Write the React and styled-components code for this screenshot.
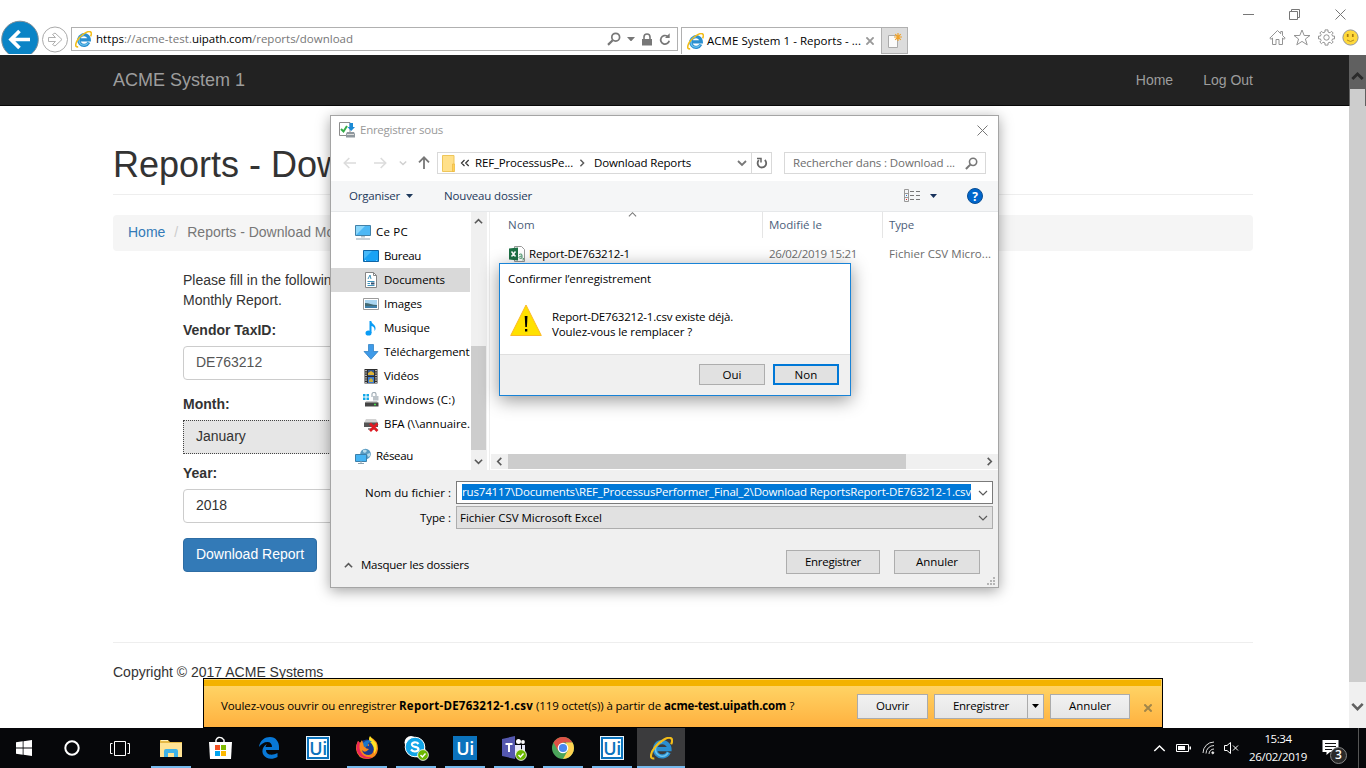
import React, { useLayoutEffect, useRef, useState } from "react";
import styled, { createGlobalStyle, css } from "styled-components";

const ui = `"Open Sans", "Noto Sans", sans-serif`;
const web = `"Liberation Sans", Arial, sans-serif`;

const GlobalStyle = createGlobalStyle`
  *, *::before, *::after { box-sizing: border-box; }
  body { margin: 0; background: #fff; overflow: hidden; }
  svg { display: block; flex: none; }
`;

/* ---------- text that keeps a fixed advance width ---------- */

const FitSpan = styled.span`
  display: inline-block;
  flex: none;
  width: max-content;
  white-space: pre;
  color: ${(p) => p.$color || "inherit"};
  font-weight: ${(p) => (p.$bold ? 700 : "inherit")};
`;

function Fit({ w, color, bold, children }) {
  const ref = useRef(null);
  const [spacing, setSpacing] = useState(0);
  useLayoutEffect(() => {
    const natural = ref.current.getBoundingClientRect().width;
    setSpacing((w - natural) / ref.current.textContent.length);
  }, [w]);
  return (
    <FitSpan ref={ref} $color={color} $bold={bold} style={{ letterSpacing: spacing }}>
      {children}
    </FitSpan>
  );
}

/* ---------- shared icons ---------- */

const IeLogo = ({ size = 16 }) => (
  <svg width={size} height={size} viewBox="0 0 16 16" fill="none">
    <path d="M13 10.7A5 5 0 1 1 13.5 8.4H4.5" stroke="#2a8fd0" strokeWidth="3" />
    <path d="M12.6 10.9A4.7 4.7 0 0 1 3.8 8.6A4.9 4.9 0 0 1 8.4 3.7" stroke="#6cc4ee" strokeWidth="1.1" />
    <path d="M3 14.9C-.5 15.6.2 11 3.6 6.9C7.4 2.300 13.300-.9 15 1.200C15.700 2.100 15.400 3.500 14.700 5" stroke="#f3bd19" strokeWidth="1.5" />
  </svg>
);

const Chevron = ({ dir = "down", w = 9, color = "#5a5a5a", sw = 1.8 }) => {
  const turn = { down: 0, left: 90, up: 180, right: 270 }[dir];
  return (
    <svg width={w} height={w} viewBox="0 0 10 10" fill="none">
      <path d="M1 3L5 7L9 3" stroke={color} strokeWidth={sw} transform={`rotate(${turn} 5 5)`} />
    </svg>
  );
};

const Caret = ({ w = 8, color = "#1e395b" }) => (
  <svg width={w} height={w / 2 + 0.5} viewBox="0 0 8 4.500">
    <path d="M0 0H8L4 4.500Z" fill={color} />
  </svg>
);

const Magnifier = ({ size = 14, color = "#777" }) => (
  <svg width={size} height={size} viewBox="0 0 14 14" fill="none" stroke={color}>
    <circle cx="8.700" cy="5.200" r="3.900" strokeWidth="1.700" />
    <path d="M5.700 8.200L1 12.900" strokeWidth="2.200" />
  </svg>
);

const Cross = ({ size = 11, color = "#777", sw = 1 }) => (
  <svg width={size} height={size} viewBox="0 0 11 11">
    <path d="M.5.5L10.500 10.500M10.500.5L.5 10.500" stroke={color} strokeWidth={sw} />
  </svg>
);

const ArrowIcon = ({ turn = 0, size = 14, color, sw = 1.6 }) => (
  <svg width={size} height={size} viewBox="0 0 14 14" fill="none" stroke={color} strokeWidth={sw}>
    <path d="M1.500 7H13M6.300 2L1.300 7L6.300 12" transform={`rotate(${turn} 7 7)`} />
  </svg>
);

/* ---------- browser frame ---------- */

const Screen = styled.div`
  position: relative;
  display: flex;
  flex-direction: column;
  width: 1366px;
  height: 768px;
  overflow: hidden;
  font-family: ${ui};
  font-size: 11.5px;
  line-height: 16px;
  color: #000;
  background: #fff;
`;

const Chrome = styled.header`
  flex: none;
  height: 54px;
  margin-bottom: 1px;
  overflow: hidden;
  display: grid;
  grid-template-rows: 27px 27px;
`;

const WindowControls = styled.div`
  display: flex;
  justify-content: flex-end;
  gap: 35px;
  padding: 9px 20px 0 0;
`;

const NavRow = styled.div`
  display: flex;
  align-items: flex-start;
`;

const RoundButtons = styled.div`
  width: 71px;
  height: 27px;
  display: flex;
  align-items: center;
  margin-top: -1px;
`;

const AddressBar = styled.div`
  width: 607px;
  height: 24px;
  display: flex;
  align-items: center;
  border: 1px solid #b0b0b0;
  padding: 0 6px 0 3px;
  gap: 4px;
`;

const AddressTools = styled.div`
  margin-left: auto;
  display: flex;
  align-items: center;
  gap: 6px;
`;

const Tab = styled.div`
  width: 200px;
  height: 27px;
  margin-left: 3px;
  display: flex;
  align-items: center;
  gap: 3px;
  border: 1px solid #b0b0b0;
  border-width: 1px 0 0 1px;
  padding: 0 7px 0 5px;
  & > svg:last-child { margin-left: auto; }
`;

const NewTab = styled.div`
  width: 27px;
  height: 27px;
  display: grid;
  place-items: center;
  border: 1px solid #b0b0b0;
  background: #dcdcdc;
`;

const ChromeTools = styled.div`
  margin: 2px 7px 0 auto;
  display: flex;
  gap: 7px;
`;

function BrowserChrome() {
  return (
    <Chrome>
      <WindowControls>
        <svg width="11" height="11"><path d="M0 5.500H11" stroke="#777" /></svg>
        <svg width="11" height="11" fill="none" stroke="#777"><path d="M.5 2.500H8.500V10.500H.5ZM2.500 2.500V.5H10.500V8.500H8.500" /></svg>
        <Cross />
      </WindowControls>
      <NavRow>
        <RoundButtons>
          <svg width="71" height="40" viewBox="0 0 71 40">
            <circle cx="20" cy="19.500" r="18.300" fill="#0a84c6" stroke="#7b8d98" />
            <path d="M30 19.500H12M19.500 11L11 19.500L19.500 28" fill="none" stroke="#fff" strokeWidth="3.700" />
            <circle cx="55" cy="19.500" r="12.500" fill="#fff" stroke="#aaa" />
            <path d="M48.500 17.500H55.500L52.500 14.500L55 13L62 19.500L55 26L52.500 24.500L55.500 21.500H48.500Z" fill="#fff" stroke="#b0b0b0" />
          </svg>
        </RoundButtons>
        <AddressBar>
          <IeLogo size={17} />
          <div>
            <Fit w={28}>https</Fit><Fit w={68} color="#777">://acme-test.</Fit>
            <Fit w={60}>uipath.com</Fit><Fit w={101} color="#777">/reports/download</Fit>
          </div>
          <AddressTools>
            <Magnifier />
            <Caret w={8} color="#777" />
            <svg width="12" height="13" viewBox="0 0 12 13"><path d="M1 6H11V12.500H1Z" fill="#777" /><path d="M3 6V4A3 3 0 0 1 9 4V6" fill="none" stroke="#777" strokeWidth="1.600" /></svg>
            <svg width="12" height="13" viewBox="0 0 12 13"><path d="M8.500 3.300A4.300 4.300 0 1 0 10.200 7.700" fill="none" stroke="#777" strokeWidth="1.700" /><path d="M6 4.900H10.700V.3Z" fill="#777" /></svg>
          </AddressTools>
        </AddressBar>
        <Tab>
          <IeLogo size={17} />
          <Fit w={154}>ACME System 1 - Reports - ...</Fit>
          <Cross size={8} color="#999" sw={2.6} />
        </Tab>
        <NewTab>
          <svg width="16" height="16" viewBox="0 0 16 16"><path d="M1.500 2.500H10.500V14.500H1.500Z" fill="#fbfbfb" stroke="#aaa" /><path d="M11 0V8M7 4H15M8.200 1.200L13.800 6.800M13.800 1.200L8.200 6.800" stroke="#efa22a" strokeWidth="1.200" /></svg>
        </NewTab>
        <ChromeTools>
          <svg width="17" height="17" viewBox="0 0 17 17" fill="none" stroke="#949494"><path d="M8.500 1.500L.8 9.200L2 10.300L3.500 9V15.500H7V10.500H10V15.500H13.500V9L15 10.300L16.200 9.200L13.500 6.500V2.500H11.700V4.700Z" /></svg>
          <svg width="18" height="17" viewBox="0 0 18 17" fill="none" stroke="#949494"><path d="M9 1L11.200 6.500H17L12.400 10L14.200 15.800L9 12.400L3.800 15.800L5.600 10L1 6.500H6.800Z" /></svg>
          <svg width="17" height="17" viewBox="0 0 17 17" fill="none" stroke="#949494">
            <circle cx="8.500" cy="8.500" r="2.700" />
            <path d="M7 .9H10V3L12 3.800L13.500 2.300L15.200 4L13.900 5.500L14.600 7.100H16.500V9.900H14.600L13.900 11.500L15.200 13L13.500 14.700L12 13.200L10 14V16.100H7V14L5 13.200L3.500 14.700L1.800 13L3.100 11.500L2.400 9.900H.5V7.100H2.400L3.100 5.500L1.800 4L3.500 2.300L5 3.800L7 3Z" />
          </svg>
          <svg width="17" height="17" viewBox="0 0 17 17"><circle cx="8.500" cy="8.500" r="7.600" fill="#ffd93b" stroke="#949494" /><path d="M5.700 5V8M10.800 5V8" stroke="#a67a13" strokeWidth="1.700" /><path d="M5 11Q8.500 14 12 11" fill="none" stroke="#b28a22" /></svg>
        </ChromeTools>
      </NavRow>
    </Chrome>
  );
}

/* ---------- web page ---------- */

const Viewport = styled.main`
  flex: none;
  height: 673px;
  display: grid;
  grid-template-columns: 1349px 17px;
  font-family: ${web};
`;

const Page = styled.div`
  font-size: 14px;
  line-height: 20px;
  color: #333;
  overflow: hidden;
`;

const NavBar = styled.nav`
  height: 51px;
  display: flex;
  align-items: center;
  gap: 30px;
  padding: 0 96px 1px 113px;
  color: #9d9d9d;
  background: #222;
  border-bottom: 1px solid #080808;
`;

const Brand = styled.span`
  font-size: 18px;
  margin-right: auto;
`;

const Content = styled.div`
  width: 1140px;
  margin-left: 113px;
`;

const Title = styled.h1`
  margin: 0 0 20px;
  padding: 39px 0 9px;
  font-size: 36px;
  line-height: 40px;
  font-weight: 400;
  border-bottom: 1px solid #eee;
`;

const Breadcrumb = styled.div`
  height: 36px;
  display: flex;
  align-items: center;
  padding: 0 15px 2px;
  background: #f5f5f5;
  color: #777;
  border-radius: 4px;
`;

const Crumb = styled.a`
  color: #337ab7;
`;

const Slash = styled.span`
  color: #ccc;
  padding: 0 9px 0 9px;
`;

const Form = styled.form`
  width: 262px;
  margin-left: 70px;
  padding-top: 19px;
`;

const Intro = styled.p`
  margin: 0 0 10px;
`;

const FieldLabel = styled.label`
  display: block;
  font-weight: 700;
  margin-bottom: 6px;
`;

const Field = styled.div`
  height: 34px;
  padding: 5px 12px;
  margin-bottom: ${(p) => p.$gap}px;
  border: 1px solid #ccc;
  border-radius: 4px;
  color: ${(p) => p.$color || "#333"};
  ${(p) => p.$focused && css`
    background: #e6e6e6;
    border: 1px dotted #444;
    border-radius: 0;
  `}
`;

const PrimaryButton = styled.button`
  width: 134px;
  height: 34px;
  padding: 0 0 2px;
  border: 1px solid #2e6da4;
  border-radius: 4px;
  background: #337ab7;
  color: #fff;
  font: 14px ${web};
`;

const Footer = styled.footer`
  margin-top: 70px;
  padding-top: 19px;
  border-top: 1px solid #eee;
`;

const PageScroll = styled.div`
  display: flex;
  flex-direction: column;
  background: #f0f0f0;
`;

const ScrollUp = styled.div`
  height: 34px;
  display: grid;
  place-items: center;
  padding-top: 9px;
  background: #606060;
`;

const PageThumb = styled.div`
  height: 593px;
  background: linear-gradient(#606060, #606060) left top / 1px 17px no-repeat,
    linear-gradient(#606060, #606060) right top / 1px 17px no-repeat, #cdcdcd;
`;

const ScrollDown = styled.div`
  height: 46px;
  display: grid;
  place-items: center;
  padding-top: 3px;
`;

function WebPage() {
  return (
    <Viewport>
      <Page>
        <NavBar>
          <Brand>ACME System 1</Brand>
          <span>Home</span>
          <span>Log Out</span>
        </NavBar>
        <Content>
          <Title>Reports - Download Monthly Report</Title>
          <Breadcrumb>
            <Crumb>Home</Crumb>
            <Slash>/</Slash>
            <span>Reports - Download Monthly Report</span>
          </Breadcrumb>
          <Form>
            <Intro>Please fill in the following to download<br />Monthly Report.</Intro>
            <FieldLabel>Vendor TaxID:</FieldLabel>
            <Field $gap={14} $color="#555">DE763212</Field>
            <FieldLabel>Month:</FieldLabel>
            <Field $gap={9} $focused>January</Field>
            <FieldLabel>Year:</FieldLabel>
            <Field $gap={15}>2018</Field>
            <PrimaryButton type="button">Download Report</PrimaryButton>
          </Form>
          <Footer>Copyright © 2017 ACME Systems</Footer>
        </Content>
      </Page>
      <PageScroll>
        <ScrollUp><Chevron dir="up" w={13} color="#2b2b2b" sw={2.2} /></ScrollUp>
        <PageThumb />
        <ScrollDown><Chevron w={13} color="#606060" sw={2} /></ScrollDown>
      </PageScroll>
    </Viewport>
  );
}

/* ---------- download bar ---------- */

const DownloadBar = styled.div`
  position: absolute;
  left: 203px;
  top: 678px;
  width: 960px;
  height: 50px;
  display: flex;
  align-items: center;
  padding: 6px 10px 0 17px;
  border: 1px solid #000;
  background: linear-gradient(#f3b200, #f3b200) 0 1px / 957px 6px no-repeat,
    linear-gradient(#ffd364, #ffd364 7px, #ffb13f);
`;

const BarButton = styled.button`
  width: ${(p) => p.$w}px;
  height: 25px;
  margin-left: ${(p) => p.$ml}px;
  padding: 0;
  display: grid;
  place-items: center;
  border: 1px solid #ababab;
  background: linear-gradient(#f1f1f1, #e6e6e6);
  font: inherit;
`;

const BarClose = styled.div`
  margin: 3px 0 0 auto;
`;

function DownloadPrompt() {
  return (
    <DownloadBar>
      <Fit w={178}>Voulez-vous ouvrir ou enregistrer </Fit>
      <Fit w={134} bold>Report-DE763212-1.csv</Fit>
      <Fit w={131}> (119 octet(s)) à partir de </Fit>
      <Fit w={122} bold>acme-test.uipath.com</Fit>
      <Fit w={9}> ?</Fit>
      <BarButton $w={71} $ml={62}><Fit w={33}>Ouvrir</Fit></BarButton>
      <BarButton $w={94} $ml={6}><Fit w={56}>Enregistrer</Fit></BarButton>
      <BarButton $w={17} $ml={-1}><Caret w={7} color="#000" /></BarButton>
      <BarButton $w={80} $ml={6}><Fit w={42}>Annuler</Fit></BarButton>
      <BarClose><Cross size={8} color="#a1864a" sw={2.7} /></BarClose>
    </DownloadBar>
  );
}

/* ---------- save dialog ---------- */

const Dialog = styled.section`
  position: absolute;
  left: 330px;
  top: 115px;
  width: 669px;
  height: 473px;
  display: flex;
  flex-direction: column;
  border: 1px solid #a5a5a5;
  background: #fff;
  box-shadow: 0 3px 13px rgba(0, 0, 0, 0.36);
`;

const DialogTitle = styled.div`
  height: 30px;
  display: flex;
  align-items: center;
  gap: 5px;
  padding: 0 10px 2px 8px;
  color: #999;
  & > svg:last-child { margin-left: auto; }
`;

const PathRow = styled.div`
  height: 35px;
  display: flex;
  align-items: center;
  padding: 0 12px 1px;
`;

const HistoryArrows = styled.div`
  width: 94px;
  display: grid;
  grid-template-columns: 30px 26px 18px 14px;
  align-items: center;
`;

const Box = styled.div`
  width: ${(p) => p.$w}px;
  height: 22px;
  margin-left: ${(p) => p.$ml || 0}px;
  display: flex;
  align-items: center;
  justify-content: ${(p) => p.$justify || "flex-start"};
  gap: ${(p) => p.$gap || 0}px;
  padding: 0 ${(p) => p.$pr || 0}px 0 ${(p) => p.$pl || 0}px;
  border: 1px solid #d9d9d9;
`;

const PathSeparator = styled.div`
  width: 11px;
`;

const PathEnd = styled.div`
  margin-left: auto;
`;

const Toolbar = styled.div`
  height: 31px;
  display: flex;
  align-items: center;
  padding: 0 15px 1px 18px;
  color: #1e395b;
  background: #f5f6f7;
  border-bottom: 1px solid #e6e8ea;
`;

const ToolItem = styled.div`
  display: flex;
  align-items: center;
  gap: 6px;
  margin-right: 31px;
`;

const ToolIcons = styled.div`
  margin-left: auto;
  display: flex;
  align-items: center;
`;

const CaretSlot = styled.div`
  margin-left: 9px;
`;

const Help = styled.div`
  width: 16px;
  height: 16px;
  margin-left: 30px;
  display: grid;
  place-items: center;
  border: 1px solid #094e94;
  border-radius: 50%;
  background: #0066cc;
  color: #fff;
  font-weight: 700;
  font-size: 12px;
`;

const Browser = styled.div`
  height: 258px;
  display: grid;
  grid-template-columns: 140px 16px 1fr;
`;

const Tree = styled.div`
  overflow: hidden;
  padding-top: 8px;
`;

const TreeRow = styled.div`
  width: 139px;
  height: 24px;
  display: flex;
  align-items: center;
  gap: 5px;
  overflow: hidden;
  margin-top: ${(p) => p.$mt || 0}px;
  padding-left: ${(p) => (p.$root ? 24 : 32)}px;
  background: ${(p) => (p.$selected ? "#d9d9d9" : "transparent")};
`;

const VScroll = styled.div`
  display: flex;
  flex-direction: column;
  align-items: center;
  justify-content: space-between;
  padding: 5px 1px 4px 0;
  background: #f0f0f0;
`;

const VThumb = styled.div`
  width: 15px;
  height: 104px;
  margin: 113px 0 0;
  background: #cdcdcd;
`;

const FileList = styled.div`
  display: flex;
  flex-direction: column;
  margin-left: 2px;
  border-left: 1px solid #eee;
`;

const Columns = styled.div`
  position: relative;
  display: grid;
  grid-template-columns: 273px 120px 1fr;
  height: 26px;
  color: #4c607a;
`;

const ColumnHead = styled.div`
  padding: 5px 0 0 ${(p) => p.$pl}px;
  border-right: ${(p) => (p.$last ? 0 : 1)}px solid #e5e5e5;
`;

const SortMark = styled.div`
  position: absolute;
  left: 138px;
  top: -2px;
`;

const FileRow = styled.div`
  display: grid;
  grid-template-columns: 279px 120px 1fr;
  padding-top: 8px;
  color: #6d6d6d;
`;

const FileName = styled.div`
  display: flex;
  gap: 4px;
  padding-left: 19px;
  color: #000;
`;

const HScroll = styled.div`
  height: 15px;
  margin: auto 0 1px 1px;
  display: grid;
  grid-template-columns: 17px 398px 1fr;
  align-items: center;
  justify-items: center;
  background: #f0f0f0;
  & > svg:last-child { justify-self: end; margin-right: 4px; }
`;

const HThumb = styled.div`
  width: 100%;
  height: 15px;
  background: #cdcdcd;
`;

const SavePanel = styled.div`
  flex: 1;
  display: flex;
  flex-direction: column;
  padding: 11px 5px 0 0;
  background: #f0f0f0;
`;

const SaveRow = styled.div`
  display: flex;
  justify-content: flex-end;
  align-items: center;
  gap: 5px;
  height: 23px;
  margin-bottom: 2px;
`;

const Combo = styled.div`
  width: 537px;
  height: 23px;
  display: flex;
  align-items: center;
  padding: 0 4px 0 ${(p) => (p.$plain ? 3 : 5)}px;
  border: 1px solid ${(p) => (p.$plain ? "#adadad" : "#7a7a7a")};
  background: ${(p) => (p.$plain ? "#e1e1e1" : "#fff")};
  & > svg { margin-left: auto; }
`;

const Selection = styled.div`
  height: 16px;
  margin-bottom: 2px;
  line-height: 15px;
  color: #fff;
  background: #0078d7;
`;

const ActionRow = styled.div`
  display: flex;
  align-items: flex-start;
  padding: 19px 13px 0 13px;
`;

const HideFolders = styled.div`
  margin: 7px auto 0 0;
  display: flex;
  align-items: center;
  gap: 8px;
`;

const WinButton = styled.button`
  width: ${(p) => p.$w}px;
  height: ${(p) => p.$h}px;
  margin-left: ${(p) => p.$ml}px;
  padding: 0;
  display: grid;
  place-items: center;
  border: ${(p) => (p.$focus ? "2px solid #0078d7" : "1px solid #adadad")};
  background: #e1e1e1;
  font: inherit;
`;

const Grip = styled.svg`
  position: absolute;
  right: 2px;
  bottom: 1px;
`;

const treeIcons = {
  pc: <svg width="16" height="16" viewBox="0 0 16 16"><path d="M.5 1.500H15.500V11.500H.5Z" fill="#4db8f5" stroke="#4281a8" /><path d="M1 11L10 2H1Z" fill="#8bd7fb" /><path d="M6 12H10V13.500H6Z" fill="#b8c4cb" /><path d="M1 15H15" stroke="#8fa3b0" /></svg>,
  desk: <svg width="16" height="16" viewBox="0 0 16 16"><path d="M.5 2.500H15.500V13.500H.5Z" fill="#19a2f5" stroke="#0e64a5" /><path d="M1 11L9 3H1Z" fill="#46b9fa" /><path d="M2 12.500H13.500" stroke="#d8effc" strokeDasharray="1 10" /></svg>,
  doc: <svg width="16" height="16" viewBox="0 0 16 16"><path d="M2.500.5H10.500L13.500 3.500V15.500H2.500Z" fill="#fff" stroke="#858585" /><path d="M10.500.5V3.500H13.500" fill="none" stroke="#858585" /><path d="M5 7L7 3L8 7M4.500 9.500H11.500M4.500 11.500H7M4.500 13.500H11.500" fill="none" stroke="#3e92ba" /><path d="M8 11.500H11.500" stroke="#334f70" strokeWidth="2" /></svg>,
  img: <svg width="16" height="16" viewBox="0 0 16 16"><path d="M.5 2.500H15.500V13.500H.5Z" fill="#fff" stroke="#9b9b9b" /><path d="M2 4H14V12H2Z" fill="#a9d5f0" /><path d="M2 7C6 7 9 9 14 9V12H2Z" fill="#426a74" /><path d="M2 10H14V12H2Z" fill="#3f7fa8" /></svg>,
  music: <svg width="16" height="16" viewBox="0 0 16 16"><ellipse cx="5.500" cy="13" rx="3" ry="2.600" fill="#0a9cf5" /><path d="M6.500 13V1H8.300C8.500 4 13 4.500 12.500 9C12.400 9.800 12 10.500 11.500 11C12 8 10.500 6.600 8.500 6V13Z" fill="#0a9cf5" /></svg>,
  down: <svg width="16" height="16" viewBox="0 0 16 16"><path d="M5.500.5H10.500V7.500H15L8 15.300L1 7.500H5.500Z" fill="#3e9ae8" stroke="#2478bf" strokeWidth=".7" /></svg>,
  video: <svg width="16" height="16" viewBox="0 0 16 16"><path d="M1.500 1H14.500V15.500H1.500Z" fill="#2d2d2d" /><path d="M3 2V15M13 2V15" stroke="#eee" strokeWidth="1.300" strokeDasharray="1.200 1.200" /><path d="M5 2H11V8H5Z" fill="#35588e" /><path d="M5 9H11V15H5Z" fill="#3a7bd1" /><path d="M5 5L8 3L11 5V7H5Z" fill="#e0b436" /><path d="M6 12L8 10L10 12V14H6Z" fill="#c7ae42" /></svg>,
  disk: <svg width="16" height="16" viewBox="0 0 16 16"><path d="M0 2H2.500V4.500H0ZM3.500 2H6V4.500H3.500ZM0 5.500H2.500V8H0ZM3.500 5.500H6V8H3.500Z" fill="#12a8e8" /><path d="M3 9H14L15 11H2Z" fill="#c9c9c9" /><path d="M2 10.500H15.500V14.500H2Z" fill="#454545" /><path d="M11 12.500H13" stroke="#48e04c" strokeWidth="1.500" /><path d="M9 5V2.800A2 2 0 0 1 13 2V4" fill="none" stroke="#a5b0b8" strokeWidth="1.200" /><path d="M10 4H15.500V8.500H10Z" fill="#bcc3c8" /></svg>,
  net: <svg width="16" height="16" viewBox="0 0 16 16"><path d="M3 3H13L15 7H1Z" fill="#d2d2d2" /><path d="M1 6.500H15V11H1Z" fill="#555" /><path d="M5 13H11" stroke="#999" strokeWidth="2" /><path d="M7 7.500L14.500 15M14.500 7.500L7 15" stroke="#de1b23" strokeWidth="2.700" /></svg>,
  globe: <svg width="16" height="16" viewBox="0 0 16 16"><circle cx="10.500" cy="6" r="5.300" fill="#5a9cc2" /><path d="M8 2Q11 1 12 3L10 5L8 4ZM12 6L15 5V8L13 9Z" fill="#b7dcec" /><path d="M.5 6.500H11.500V13.500H.5Z" fill="#46b4f3" stroke="#3c7fa9" /><path d="M3 15.500H9M6 13V15" stroke="#8aa2b1" /></svg>,
};

const places = [
  { icon: "pc", label: "Ce PC", w: 32, root: true },
  { icon: "desk", label: "Bureau", w: 37 },
  { icon: "doc", label: "Documents", w: 61, selected: true },
  { icon: "img", label: "Images", w: 38 },
  { icon: "music", label: "Musique", w: 46 },
  { icon: "down", label: "Téléchargements", w: 91 },
  { icon: "video", label: "Vidéos", w: 35 },
  { icon: "disk", label: "Windows (C:)", w: 71 },
  { icon: "net", label: "BFA (\\\\annuaire.", w: 86 },
  { icon: "globe", label: "Réseau", w: 37, root: true, mt: 8 },
];

function SaveDialog() {
  return (
    <Dialog>
      <DialogTitle>
        <svg width="16" height="16" viewBox="0 0 16 16"><path d="M.5.5H11V13.500H.5Z" fill="#fff" stroke="#8d8d8d" /><path d="M2 7L4.500 9.500L8 4" fill="none" stroke="#35ac49" strokeWidth="2" /><path d="M10.500 1H14V5H16L12.200 9L8.500 5H10.500Z" fill="#1b8ad5" /><path d="M8 10H15L16 12V15.500H7V12Z" fill="#8f989e" /><path d="M8 12.500H15" stroke="#ddd" /></svg>
        <Fit w={83}>Enregistrer sous</Fit>
        <Cross size={11} color="#777" />
      </DialogTitle>
      <PathRow>
        <HistoryArrows>
          <ArrowIcon color="#dcdcdc" />
          <ArrowIcon color="#dcdcdc" turn={180} />
          <Chevron w={8} color="#d0d0d0" />
          <ArrowIcon color="#777" turn={90} sw={1.8} />
        </HistoryArrows>
        <Box $w={315} $pl={4} $pr={4} $gap={5}>
          <svg width="13" height="17" viewBox="0 0 13 17"><path d="M.5.5H12V16.500H.5Z" fill="#ffe08a" stroke="#eec65a" /><path d="M10.500 9H12.700V16.500H10.500Z" fill="#ffd158" stroke="#e7b13b" strokeWidth=".6" /></svg>
          <svg width="10" height="9" viewBox="0 0 10 9" fill="none" stroke="#333" strokeWidth="1.200"><path d="M4.500 1L1.500 4L4.500 7M8.700 1L5.700 4L8.700 7" /></svg>
          <Fit w={98}>REF_ProcessusPe...</Fit>
          <PathSeparator><Chevron dir="right" w={8} /></PathSeparator>
          <Fit w={97}>Download Reports</Fit>
          <PathEnd><Chevron w={10} color="#777" /></PathEnd>
        </Box>
        <Box $w={21} $ml={-1} $justify="center">
          <svg width="12" height="13" viewBox="0 0 12 13"><path d="M2.800 3.200A4.300 4.300 0 1 0 8.800 3" fill="none" stroke="#666" strokeWidth="1.800" /><path d="M1 1.500H5V5.500" fill="none" stroke="#666" strokeWidth="1.500" /></svg>
        </Box>
        <Box $w={202} $ml={12} $pl={8} $pr={7} $justify="space-between">
          <Fit w={162} color="#6d6d6d">Rechercher dans : Download ...</Fit>
          <Magnifier size={13} />
        </Box>
      </PathRow>
      <Toolbar>
        <ToolItem><Fit w={51}>Organiser</Fit><Caret w={7} /></ToolItem>
        <ToolItem><Fit w={88}>Nouveau dossier</Fit></ToolItem>
        <ToolIcons>
          <svg width="17" height="13" viewBox="0 0 17 13" fill="none"><path d="M.5.5H4.500V12.500H.5ZM.5 4.500H4.500M.5 8.500H4.500" stroke="#999" /><path d="M6 2.500H10M12 2.500H16M6 6.500H10M12 6.500H16M6 10.500H10M12 10.500H16" stroke="#777" /><path d="M2 6.500H3" stroke="#227ad1" /><path d="M2 10.500H3" stroke="#d22" /></svg>
          <CaretSlot><Caret w={7} color="#17325c" /></CaretSlot>
          <Help>?</Help>
        </ToolIcons>
      </Toolbar>
      <Browser>
        <Tree>
          {places.map((p) => (
            <TreeRow key={p.label} $root={p.root} $selected={p.selected} $mt={p.mt}>
              {treeIcons[p.icon]}
              <Fit w={p.w}>{p.label}</Fit>
            </TreeRow>
          ))}
        </Tree>
        <VScroll>
          <Chevron dir="up" w={9} />
          <VThumb />
          <Chevron w={9} />
        </VScroll>
        <FileList>
          <Columns>
            <ColumnHead $pl={18}><Fit w={27}>Nom</Fit></ColumnHead>
            <ColumnHead $pl={6}><Fit w={53}>Modifié le</Fit></ColumnHead>
            <ColumnHead $pl={6} $last><Fit w={25}>Type</Fit></ColumnHead>
            <SortMark><Chevron dir="up" w={9} color="#777" sw={1.200} /></SortMark>
          </Columns>
          <FileRow>
            <FileName>
              <svg width="16" height="16" viewBox="0 0 16 16"><path d="M5.500.5H12.500L15.500 3.500V15.500H5.500Z" fill="#fff" stroke="#999" /><path d="M0 2.500L9 1.500V14.500L0 13.500Z" fill="#1d7045" /><path d="M2.500 5.500L6.500 10.500M6.500 5.500L2.500 10.500" stroke="#fff" strokeWidth="1.500" /><path d="M10 8.500Q13 7 13 9V12.500M13 10Q10 10 10 11.500T13 12M14.500 12L14 14.500" fill="none" stroke="#4f9b70" /></svg>
              <Fit w={101}>Report-DE763212-1</Fit>
            </FileName>
            <Fit w={88}>26/02/2019 15:21</Fit>
            <Fit w={102}>Fichier CSV Micro...</Fit>
          </FileRow>
          <HScroll>
            <Chevron dir="left" w={9} />
            <HThumb />
            <Chevron dir="right" w={9} />
          </HScroll>
        </FileList>
      </Browser>
      <SavePanel>
        <SaveRow>
          <Fit w={86}>Nom du fichier :</Fit>
          <Combo>
            <Selection><Fit w={509}>{"rus74117\\Documents\\REF_ProcessusPerformer_Final_2\\Download ReportsReport-DE763212-1.csv"}</Fit></Selection>
            <Chevron w={10} sw={1.200} />
          </Combo>
        </SaveRow>
        <SaveRow>
          <Fit w={31}>Type :</Fit>
          <Combo $plain>
            <Fit w={142}>Fichier CSV Microsoft Excel</Fit>
            <Chevron w={10} sw={1.200} />
          </Combo>
        </SaveRow>
        <ActionRow>
          <HideFolders><Chevron dir="up" w={9} /><Fit w={108}>Masquer les dossiers</Fit></HideFolders>
          <WinButton $w={94} $h={24} $ml={0}><Fit w={56}>Enregistrer</Fit></WinButton>
          <WinButton $w={86} $h={24} $ml={14}><Fit w={42}>Annuler</Fit></WinButton>
        </ActionRow>
      </SavePanel>
      <Grip width="9" height="9" fill="#b5b5b5"><path d="M6 0H8V2H6ZM3 3H5V5H3ZM6 3H8V5H6ZM0 6H2V8H0ZM3 6H5V8H3ZM6 6H8V8H6Z" /></Grip>
    </Dialog>
  );
}

/* ---------- overwrite confirmation ---------- */

const Confirm = styled.section`
  position: absolute;
  left: 499px;
  top: 263px;
  width: 352px;
  height: 133px;
  display: flex;
  flex-direction: column;
  border: 1px solid #1883d7;
  background: #fff;
  box-shadow: 0 4px 17px rgba(0, 0, 0, 0.42);
`;

const ConfirmTitle = styled.div`
  padding: 7px 8px 0;
`;

const ConfirmBody = styled.div`
  display: flex;
  gap: 10px;
  padding: 17px 10px 0;
  line-height: 15px;
`;

const ConfirmLines = styled.div`
  display: flex;
  flex-direction: column;
  padding-top: 5px;
`;

const ConfirmFooter = styled.div`
  height: 41px;
  margin-top: auto;
  display: flex;
  justify-content: flex-end;
  padding: 9px 11px 0 0;
  background: #f0f0f0;
  border-top: 1px solid #dfdfdf;
`;

function ConfirmDialog() {
  return (
    <Confirm>
      <ConfirmTitle><Fit w={143}>Confirmer l’enregistrement</Fit></ConfirmTitle>
      <ConfirmBody>
        <svg width="32" height="32" viewBox="0 0 32 32"><path d="M16 1L31.300 31.500H.7Z" fill="#ffe100" stroke="#fcb827" /><path d="M14.700 12H17.500L16.900 23H15.300Z" fill="#000" /><path d="M15 25H17.300V27.500H15Z" fill="#000" /></svg>
        <ConfirmLines>
          <Fit w={181}>Report-DE763212-1.csv existe déjà.</Fit>
          <Fit w={140}>Voulez-vous le remplacer ?</Fit>
        </ConfirmLines>
      </ConfirmBody>
      <ConfirmFooter>
        <WinButton $w={66} $h={21} $ml={0}><Fit w={19}>Oui</Fit></WinButton>
        <WinButton $w={66} $h={21} $ml={8} $focus><Fit w={23}>Non</Fit></WinButton>
      </ConfirmFooter>
    </Confirm>
  );
}

/* ---------- taskbar ---------- */

const Taskbar = styled.footer`
  flex: none;
  height: 40px;
  display: flex;
  color: #fff;
  background: #06070a;
`;

const SystemItem = styled.div`
  width: 48px;
  height: 40px;
  display: grid;
  place-items: center;
`;

const AppItems = styled.div`
  display: flex;
  margin-left: 2px;
`;

const TaskItem = styled.div`
  width: 49px;
  height: 40px;
  padding-left: 1px;
  display: grid;
  place-items: center;
  background-image: ${(p) => (p.$open ? "linear-gradient(#76b9ed, #76b9ed)" : "none")};
  background-repeat: no-repeat;
  background-size: 40px 2px;
  background-position: 5px bottom;
  ${(p) => p.$active && css`
    width: 48px;
    margin-left: 1px;
    padding: 0;
    background-color: #3b3b3d;
    background-size: 48px 2px;
    background-position: 0 bottom;
  `}
`;

const UiTile = styled.div`
  width: 24px;
  height: 24px;
  display: grid;
  place-items: center;
  font: 600 18px/20px ${ui};
  letter-spacing: -0.5px;
  color: ${(p) => (p.$dark ? "#fff" : "#0b73bd")};
  background: ${(p) => (p.$dark ? "#0b73bd" : "#fff")};
  border: 1px solid ${(p) => (p.$dark ? "#0b73bd" : "#e9f4fb")};
  box-shadow: ${(p) => (p.$dark ? "none" : "inset 0 0 0 2px #0b73bd")};
`;

const Tray = styled.div`
  margin-left: auto;
  display: flex;
  align-items: center;
`;

const TraySlot = styled.div`
  width: ${(p) => p.$w}px;
  display: grid;
  place-items: center;
`;

const Clock = styled.div`
  width: 76px;
  display: flex;
  flex-direction: column;
  align-items: center;
  padding-right: 2px;
  line-height: 18px;
`;

const Notice = styled.div`
  position: relative;
  width: 41px;
  height: 40px;
  padding: 12px 0 0 5px;
`;

const NoticeCount = styled.span`
  position: absolute;
  left: 13px;
  top: 19px;
  width: 17px;
  height: 17px;
  border: 1px solid #888;
  border-radius: 50%;
  background: #2a2a2a;
  text-align: center;
  font-size: 12px;
  font-weight: 600;
  line-height: 14px;
`;

const DesktopEdge = styled.div`
  width: 8px;
  height: 40px;
  border-left: 1px solid #555;
`;

const okBadge = (
  <g transform="translate(15 15)">
    <circle cx="5" cy="5" r="5.400" fill="#6bb700" stroke="#fff" strokeWidth=".8" />
    <path d="M2.500 5L4.400 7L7.500 3.500" fill="none" stroke="#fff" strokeWidth="1.400" />
  </g>
);

function WindowsTaskbar() {
  return (
    <Taskbar>
      <SystemItem><svg width="16" height="16" viewBox="0 0 16 16" fill="#fff"><path d="M0 2.300L6.700 1.300V7.500H0ZM7.500 1.200L16 0V7.500H7.500ZM0 8.400H6.700V14.700L0 13.700ZM7.500 8.400H16V16L7.500 14.800Z" /></svg></SystemItem>
      <SystemItem><svg width="16" height="16"><circle cx="8" cy="8" r="6.700" fill="none" stroke="#fff" strokeWidth="2" /></svg></SystemItem>
      <SystemItem><svg width="20" height="15" fill="none" stroke="#fff"><path d="M4.500.5H15.500V14.500H4.500ZM2.500 2.500H.5V12.500H2.500M17.500 2.500H19.500V12.500H17.500" /></svg></SystemItem>
      <AppItems>
        <TaskItem $open>
          <svg width="22" height="19" viewBox="0 0 22 19"><path d="M0 1H8L10 3H22V18H0Z" fill="#e6b947" /><path d="M1 1.500H8" stroke="#fff2bd" /><path d="M0 4H22V18H0Z" fill="#ffe394" /><path d="M4 18V12Q4 10 6 10H16Q18 10 18 12V18H14V14H8V18Z" fill="#3eb2e7" /></svg>
        </TaskItem>
        <TaskItem>
          <svg width="24" height="24" viewBox="0 0 24 24"><path d="M1 6H24L23 23H2Z" fill="#fff" /><path d="M8 7V4Q10 0 14 2L16 4V7" fill="none" stroke="#fff" strokeWidth="1.400" /><path d="M7 9H12V14H7Z" fill="#f25022" /><path d="M13 9H18V14H13Z" fill="#7fba00" /><path d="M7 15H12V20H7Z" fill="#00a4ef" /><path d="M13 15H18V20H13Z" fill="#ffb900" /></svg>
        </TaskItem>
        <TaskItem>
          <svg width="22" height="22" viewBox="0 0 22 22"><path d="M1 10C2 3 7 0 12 0C18 0 21 5 21 10V13H8C8 18 14 19 19.500 16V20C14 23 8 22 5.500 18C3 14 5 9 9 7C8 8 7.500 9 7.500 10H14C14 7 12.500 5 9.500 5C6 5 3 7 1 10Z" fill="#0878d7" /></svg>
        </TaskItem>
        <TaskItem><UiTile>Ui</UiTile></TaskItem>
        <TaskItem $open>
          <svg width="24" height="24" viewBox="0 0 24 24">
            <circle cx="12" cy="12.500" r="9" fill="#193b91" />
            <path d="M3 5L5 7L7 4L8 7Q14 6 14 10Q12 9 10 11Q11 13 14 13Q10 18 7 14Q8 19 14 19Q19 18 19 11Q19 5 15 1Q23 4 23 13Q22 22 13 23Q2 23 1 13Q1 8 3 5Z" fill="#f7891b" />
            <path d="M3 5L5 7Q3 14 8 19Q12 22 18 21Q12 25 5 20Q-1 14 3 5Z" fill="#ed2559" />
            <path d="M15 0Q18 4 21 7Q23 13 19 18Q20 10 15 6Q13 3 15 0Z" fill="#ffe226" />
            <path d="M8 7Q13 2 17 6Q12 6 13 10L9 11Z" fill="#1875c8" />
          </svg>
        </TaskItem>
        <TaskItem $open>
          <svg width="26" height="26" viewBox="0 0 26 26"><circle cx="8" cy="7.500" r="6.500" fill="#fff" /><circle cx="15" cy="15" r="7.500" fill="#fff" /><circle cx="12" cy="12" r="9.800" fill="#12a5e8" stroke="#fff" /><path d="M15.500 9Q14 7 11.500 7.300Q8.500 7.700 9 10Q9.500 11.400 12 11.800Q15.500 12.300 15.500 14.300Q15 16.500 12 16.500Q9.500 16.500 8 14.500" fill="none" stroke="#fff" strokeWidth="2.200" />{okBadge}</svg>
        </TaskItem>
        <TaskItem $open><UiTile $dark>Ui</UiTile></TaskItem>
        <TaskItem $open>
          <svg width="26" height="26" viewBox="0 0 26 26"><path d="M1 4L14 1V24L1 21Z" fill="#5558af" /><path d="M4.500 9H11.500M8 9V17" stroke="#fff" strokeWidth="2" /><circle cx="17.500" cy="6.500" r="2.500" fill="#fff" /><circle cx="22" cy="7" r="1.900" fill="#fff" /><path d="M14 10H20V20H14ZM21 10H24V18H21Z" fill="#e8e8f8" />{okBadge}</svg>
        </TaskItem>
        <TaskItem $open>
          <svg width="22" height="22" viewBox="0 0 22 22"><circle cx="11" cy="11" r="11" fill="#4ba45a" /><path d="M1.500 5.500A11 11 0 0 1 20.500 5.500H11L6.300 14Z" fill="#de5246" /><path d="M20.500 5.500A11 11 0 0 1 11 22L15.700 13.700L14 5.500Z" fill="#ffd251" /><circle cx="11" cy="11" r="5.300" fill="#fff" /><circle cx="11" cy="11" r="4.100" fill="#4a87ee" /></svg>
        </TaskItem>
        <TaskItem $open><UiTile>Ui</UiTile></TaskItem>
        <TaskItem $open $active><IeLogo size={23} /></TaskItem>
      </AppItems>
      <Tray>
        <TraySlot $w={24}><Chevron dir="up" w={13} color="#fff" sw={1.100} /></TraySlot>
        <TraySlot $w={25}><svg width="15" height="10"><path d="M.5 1.500H12.500V8.500H.5Z" fill="none" stroke="#fff" /><path d="M2 3H9V7H2ZM13.500 3.500H15V6.500H13.500Z" fill="#fff" /></svg></TraySlot>
        <TraySlot $w={25}><svg width="13" height="14" viewBox="0 0 13 14" fill="none" stroke="#ddd"><circle cx="10.800" cy="11.800" r="1" fill="#fff" /><path d="M1 12A11 11 0 0 1 12 1M4 12.500A8 8 0 0 1 12 4.500M7 13A5 5 0 0 1 12 8" /></svg></TraySlot>
        <TraySlot $w={20}><svg width="15" height="12" fill="none" stroke="#fff"><path d="M.5 3.500H3L6.500.5V11.500L3 8.500H.5ZM9 3.500L14 8.500M14 3.500L9 8.500" /></svg></TraySlot>
        <Clock><Fit w={27}>15:34</Fit><Fit w={58}>26/02/2019</Fit></Clock>
        <Notice>
          <svg width="17" height="15" viewBox="0 0 17 15"><path d="M.5 0H16.500V12H8L4.500 15V12H.5Z" fill="#fff" /><path d="M3 3.500H14M3 6.500H14M3 9.500H10" stroke="#111" /></svg>
          <NoticeCount>3</NoticeCount>
        </Notice>
        <DesktopEdge />
      </Tray>
    </Taskbar>
  );
}

export default function App() {
  return (
    <Screen>
      <GlobalStyle />
      <BrowserChrome />
      <WebPage />
      <WindowsTaskbar />
      <DownloadPrompt />
      <SaveDialog />
      <ConfirmDialog />
    </Screen>
  );
}
